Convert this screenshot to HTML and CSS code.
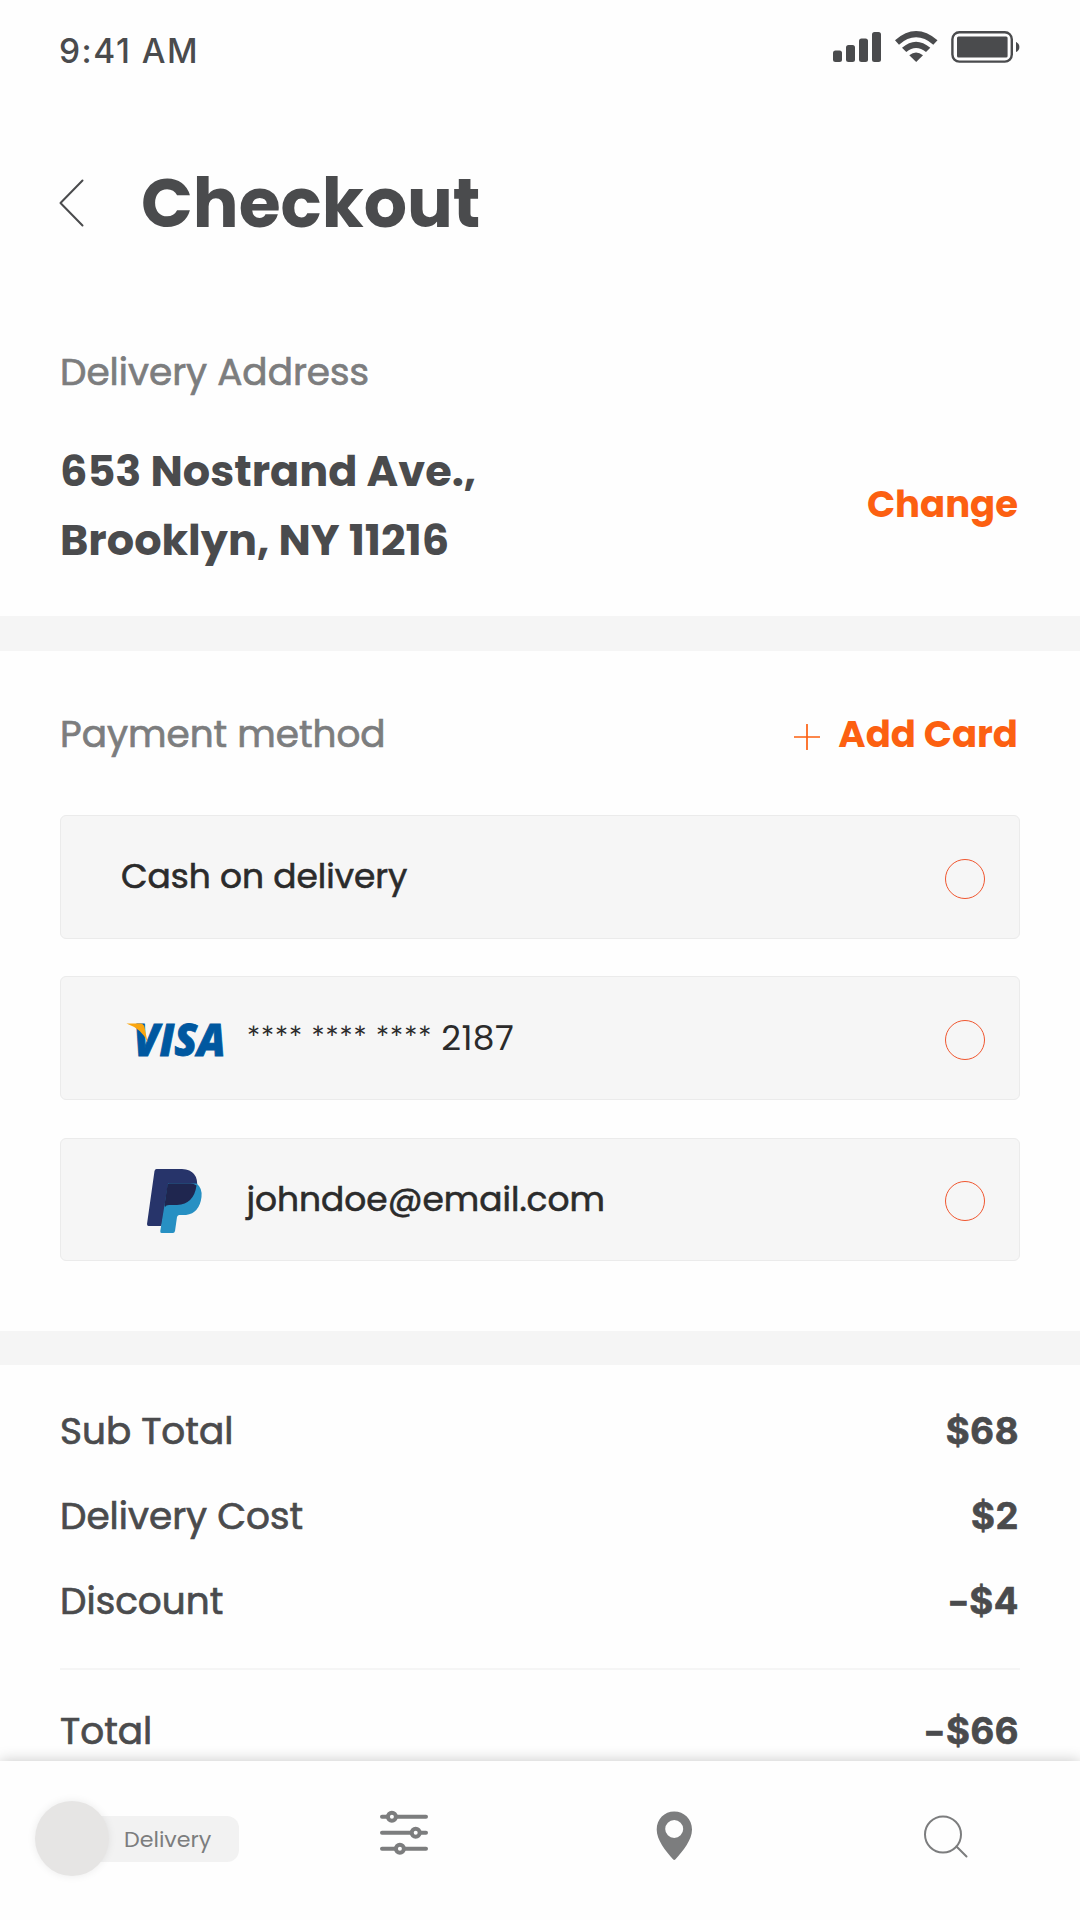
FILE: index.html
```html
<!DOCTYPE html>
<html lang="en">
<head>
  <meta charset="UTF-8" />
  <meta name="viewport" content="width=device-width, initial-scale=1.0"/>
  <title>Checkout</title>
  <link rel="stylesheet" href="styles.css">
</head>
<body>
  <header class="status-bar">
    <span class="time">9:41 AM</span>
    <svg class="status-icons" viewBox="833 31 187 32">
      <!-- signal -->
      <rect x="833" y="50.5" width="9" height="11.5" rx="2.5"/>
      <rect x="846" y="45" width="9" height="17" rx="2.5"/>
      <rect x="859" y="38.5" width="9" height="23.5" rx="2.5"/>
      <rect x="872" y="32" width="9" height="30" rx="2.5"/>
      <!-- wifi -->
      <path d="M895 40.3Q916 21.9 937.5 40.3L933.3 44.7Q916 30 899 44.7Z"/>
      <path d="M902 47.8Q916 35.8 930.3 47.8L926 52Q916 44 906.3 52Z"/>
      <path d="M909.3 55.2Q916 49.8 923 55.2L916.2 62Z"/>
      <!-- battery -->
      <rect x="952.4" y="32.2" width="59.4" height="29.4" rx="7" fill="none" stroke="#4a4b4d" stroke-width="2.4"/>
      <rect x="957" y="36.4" width="50.6" height="21.2" rx="1.5"/>
      <path d="M1016 42Q1019.4 43.5 1019.4 47T1016 52Z"/>
    </svg>
  </header>

  <div class="title-row">
    <svg class="back" viewBox="0 0 25 48"><path d="M23.5 1.5L1.5 24L23.5 46.5"/></svg>
    <h1>Checkout</h1>
  </div>

  <section class="address">
    <h2 class="label">Delivery Address</h2>
    <div class="address-row">
      <p class="street">653 Nostrand Ave.,<br>Brooklyn, NY 11216</p>
      <a class="link change">Change</a>
    </div>
  </section>

  <section class="payment">
    <div class="payment-head">
      <h2 class="label">Payment method</h2>
      <a class="link add-card">
        <svg class="plus" viewBox="0 0 26 26"><path d="M13 .5V25.5M.5 13H25.5"/></svg>
        Add Card
      </a>
    </div>
    <div class="method">
      <span class="method-text">Cash on delivery</span>
      <span class="radio"></span>
    </div>
    <div class="method">
      <svg class="logo" viewBox="0 0 123 70">
        <text class="visa" x="10.5" y="52.5" textLength="92" lengthAdjust="spacingAndGlyphs">VISA</text>
        <path d="M3.5 20.5H17.500Q20.500 20.500 21.500 24L24.500 39Q19 26 3.5 20.5Z" fill="#faa610"/>
      </svg>
      <span class="method-text card-number"><span class="stars">**** **** ****</span> 2187</span>
      <span class="radio"></span>
    </div>
    <div class="method last">
      <svg class="logo" viewBox="1 -1 123 70">
        <path d="M34.5 3H60Q77 4 75 22Q73 39 54 40H45Q43.5 40 43 42L39.5 60H26.5Q25 60 25 58L32.5 5Q33 3 34.5 3Z" fill="#27346a"/>
        <path d="M46 17.5H74.500Q80.500 22 79.500 31Q77.500 47 64 49H57Q55.500 49.5 55 51L53 65Q52.500 67 51 67H39.5Q38 67 38.3 65Z" fill="#2790c3"/>
        <path d="M47 17.5H68Q72 17.5 74.5 19.5Q72 38 55 39H47Q44 39 43 41L42.5 39L45.5 19Q45.7 17.5 47 17.5Z" fill="#1f264f"/>
      </svg>
      <span class="method-text">johndoe@email.com</span>
      <span class="radio"></span>
    </div>
  </section>

  <section class="summary">
    <div class="row"><span>Sub Total</span><b>$68</b></div>
    <div class="row"><span>Delivery Cost</span><b>$2</b></div>
    <div class="row"><span>Discount</span><b><span class="minus">-</span>$4</b></div>
    <hr>
    <div class="row"><span>Total</span><b><span class="minus">-</span>$66</b></div>
  </section>

  <nav class="tab-bar">
    <div class="toggle">
      <span class="knob"></span>
      <span class="pill">Delivery</span>
    </div>
    <svg class="icon sliders" viewBox="375 1808 60 60">
      <path d="M382 1816.7H426M382 1832.7H426M382 1848.7H426"/>
      <circle cx="391.9" cy="1816.7" r="4"/>
      <circle cx="415.7" cy="1832.7" r="4"/>
      <circle cx="399.9" cy="1848.7" r="4"/>
    </svg>
    <svg class="icon pin" viewBox="645 1808 60 60">
      <path fill-rule="evenodd" d="M674.2 1811.5C684 1811.5 692 1819 692 1829.5C692 1840 683 1851 675.5 1859.3Q674.2 1860.5 673 1859.3C665.5 1851 656.7 1840 656.7 1829.5C656.7 1819 664.5 1811.5 674.2 1811.5ZM674.2 1820A9 9 0 1 0 674.2 1838A9 9 0 1 0 674.2 1820Z"/>
    </svg>
    <svg class="icon search" viewBox="915 1808 60 60">
      <circle cx="943" cy="1834.5" r="18"/>
      <path d="M956.5 1846.5L966.5 1856.5"/>
    </svg>
  </nav>
</body>
</html>
```
FILE: styles.css
```css
* {
  box-sizing: border-box;
  margin: 0;
  padding: 0;
}
body {
  font-family: Poppins, Inter, sans-serif;
  background: #fefefe;
  color: #4a4b4d;
  width: 1080px;
  height: 1920px;
  overflow: hidden;
}
svg {
  display: block;
  flex-shrink: 0;
}
.status-bar {
  display: flex;
  justify-content: space-between;
  align-items: flex-start;
  height: 163px;
  padding: 31px 60px 0 59px;
}
.time {
  font-family: Inter, sans-serif;
  font-size: 33.5px;
  font-weight: 500;
  line-height: 40px;
  letter-spacing: 1.5px;
}
.status-icons {
  width: 187px;
  height: 32px;
  fill: #4a4b4d;
}
.title-row {
  display: flex;
  align-items: center;
  height: 80px;
  padding-left: 59px;
  gap: 57px;
}
.back {
  width: 25px;
  height: 48px;
  fill: none;
  stroke: #4a4b4d;
  stroke-width: 2;
  stroke-linecap: round;
  stroke-linejoin: round;
}
h1 {
  padding-top: 2px;
  font-size: 68px;
  font-weight: 700;
  line-height: 80px;
}
.label {
  font-size: 37.4px;
  font-weight: 400;
  line-height: 44px;
  color: #7c7d7e;
  -webkit-text-stroke: 0.7px #7c7d7e;
}
.address {
  height: 408px;
  padding: 107px 60px 0;
  border-bottom: 35px solid #f5f5f5;
}
.address-row {
  display: flex;
  justify-content: space-between;
  align-items: center;
  margin-top: 43px;
}
.street {
  font-size: 43px;
  font-weight: 700;
  line-height: 69px;
}
.link {
  padding-right: 2px;
  font-size: 37px;
  font-weight: 700;
  line-height: 44px;
  color: #fc6011;
}
.change {
  padding-bottom: 4px;
}
.payment {
  height: 714px;
  padding: 61px 60px 0;
  border-bottom: 34px solid #f5f5f5;
}
.payment-head {
  display: flex;
  justify-content: space-between;
  margin-bottom: 59px;
}
.add-card {
  display: flex;
  align-items: center;
  gap: 18px;
}
.plus {
  width: 26px;
  height: 26px;
  margin-top: 5px;
  fill: none;
  stroke: #fc6011;
  stroke-width: 1.7;
  stroke-linecap: round;
}
.method {
  display: flex;
  align-items: center;
  height: 124px;
  margin-bottom: 37px;
  padding: 0 34px 0 60px;
  background: #f6f6f6;
  border: 1px solid #ebebeb;
  border-radius: 6px;
}
.method.last {
  height: 123px;
  margin-top: 38px;
}
.method-text {
  padding-bottom: 2px;
  font-size: 34.4px;
  font-weight: 400;
  line-height: 40px;
  color: #2b2b2b;
  -webkit-text-stroke: 0.6px #2b2b2b;
}
.card-number {
  letter-spacing: 0.4px;
  -webkit-text-stroke: 0;
}
.stars {
  font-family: Lato, sans-serif;
  font-size: 33px;
  letter-spacing: 0;
}
.logo {
  width: 123px;
  height: 70px;
  margin-left: 1.5px;
}
.logo + .method-text {
  padding-left: 1px;
}
.visa {
  font-family: "Open Sans", sans-serif;
  font-size: 44px;
  font-weight: 800;
  font-style: italic;
  fill: #0058a0;
  stroke: #0058a0;
  stroke-width: 0.8;
}
.radio {
  width: 40px;
  height: 40px;
  margin: 3px 0 0 auto;
  border: 1px solid #f0562f;
  border-radius: 50%;
}
.summary {
  padding: 44px 60px 0;
}
.row {
  display: flex;
  justify-content: space-between;
  margin-bottom: 41px;
  font-size: 37.4px;
  font-weight: 400;
  line-height: 44px;
  -webkit-text-stroke: 0.7px #4a4b4d;
}
.row b {
  font-family: Inter, sans-serif;
  font-size: 36.5px;
  font-weight: 700;
  letter-spacing: 0.6px;
  padding-right: 1px;
}
.minus {
  display: inline-block;
  margin-right: 2px;
  transform: scaleX(1.3);
}
hr {
  height: 2px;
  margin: 45px 0 39px;
  border: none;
  background: #f5f5f5;
}
.tab-bar {
  position: fixed;
  left: 0;
  bottom: 0;
  display: grid;
  grid-template-columns: repeat(4, 1fr);
  align-items: center;
  justify-items: center;
  width: 1080px;
  height: 159px;
  padding-bottom: 5px;
  background: #fefefe;
  box-shadow: 0 0 14px rgba(0, 0, 0, 0.22);
}
.icon {
  width: 60px;
  height: 60px;
}
.sliders {
  fill: #fefefe;
  stroke: #7c7d7e;
  stroke-width: 4;
  stroke-linecap: round;
}
.pin {
  fill: #7c7d7e;
}
.search {
  fill: none;
  stroke: #7c7d7e;
  stroke-width: 2;
  stroke-linecap: round;
}
.toggle {
  display: flex;
  align-items: center;
  justify-self: start;
  padding-left: 35px;
}
.knob {
  z-index: 1;
  width: 74px;
  height: 75px;
  border-radius: 50%;
  background: #e6e5e4;
  box-shadow: 0 0 8px rgba(0, 0, 0, 0.08);
}
.pill {
  width: 160px;
  height: 46px;
  margin: 2px 0 0 -30px;
  padding-left: 45px;
  border-radius: 12px;
  background: #f2f2f2;
  font-size: 22.2px;
  line-height: 48px;
  color: #7c7d7e;
}
```
